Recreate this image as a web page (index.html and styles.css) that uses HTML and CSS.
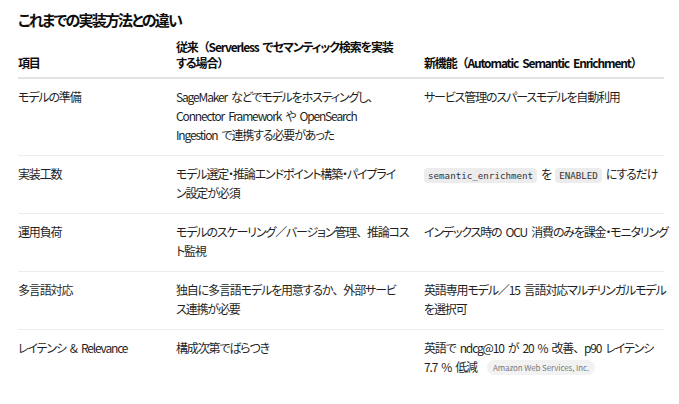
FILE: index.html
```html
<!DOCTYPE html>
<html lang="ja">
<head>
<meta charset="utf-8">
<link rel="stylesheet" href="styles.css">
</head>
<body>
<main class="page">
  <h2 class="title">これまでの実装方法との違い</h2>
  <table class="cmp">
    <colgroup>
      <col class="c1">
      <col class="c2">
      <col class="c3">
    </colgroup>
    <thead>
      <tr>
        <th>項目</th>
        <th>従来<span class="fw">（</span>Serverless でセマンティック検索を実装<br>する場合<span class="fw">）</span></th>
        <th>新機能<span class="fw">（</span>Automatic Semantic Enrichment<span class="fw">）</span></th>
      </tr>
    </thead>
    <tbody>
      <tr>
        <td>モデルの準備</td>
        <td>SageMaker などでモデルをホスティングし<span class="fw">、</span><br>Connector Framework や OpenSearch<br>Ingestion で連携する必要があった</td>
        <td>サービス管理のスパースモデルを自動利用</td>
      </tr>
      <tr>
        <td>実装工数</td>
        <td>モデル選定・推論エンドポイント構築・パイプライ<br>ン設定が必須</td>
        <td><code class="code">semantic_enrichment</code> を <code class="code">ENABLED</code> にするだけ</td>
      </tr>
      <tr>
        <td>運用負荷</td>
        <td>モデルのスケーリング／バージョン管理<span class="fw">、</span>推論コス<br>ト監視</td>
        <td>インデックス時の OCU 消費のみを課金・モニタリング</td>
      </tr>
      <tr>
        <td>多言語対応</td>
        <td>独自に多言語モデルを用意するか<span class="fw">、</span>外部サービ<br>ス連携が必要</td>
        <td>英語専用モデル／15 言語対応マルチリンガルモデル<br>を選択可</td>
      </tr>
      <tr>
        <td>レイテンシ &amp; Relevance</td>
        <td>構成次第でばらつき</td>
        <td>英語で ndcg@10 が 20 % 改善<span class="fw">、</span>p90 レイテンシ<br>7.7 % 低減 <span class="src">Amazon Web Services, Inc.</span></td>
      </tr>
    </tbody>
  </table>
</main>
</body>
</html>
```

FILE: styles.css
```css
html, body {
  margin: 0;
  padding: 0;
  background: #ffffff;
}

body {
  font-family: "Noto Sans CJK JP", "Noto Sans", sans-serif;
  font-feature-settings: "palt";
  color: #1f1f1f;
  font-size: 12px;
}

.page {
  padding: 9px 15px 0 18px;
}

.title {
  margin: 0 0 2px 0;
  font-size: 15px;
  line-height: 22px;
  font-weight: 700;
  letter-spacing: -1.8px;
  color: #0d0d0d;
}

.cmp {
  width: 646px;
  table-layout: fixed;
  border-collapse: collapse;
}

.c1 { width: 158px; }
.c2 { width: 248px; }
.c3 { width: 240px; }

.cmp th,
.cmp td {
  text-align: left;
  white-space: nowrap;
  letter-spacing: -1.15px;
  word-spacing: 2.5px;
}

.fw {
  font-feature-settings: normal;
}

.cmp th {
  vertical-align: bottom;
  font-weight: 700;
  line-height: 16px;
  padding: 6px 8px 6px 0;
  border-bottom: 2px solid #e3e3e3;
  color: #0d0d0d;
}

.cmp td {
  vertical-align: top;
  line-height: 19px;
  padding: 8px 8px 11px 0;
  border-bottom: 1px solid #ececec;
}

.cmp th:last-child,
.cmp td:last-child {
  padding-right: 0;
}

.cmp tbody tr:last-child td {
  border-bottom: none;
}

.code {
  font-family: "DejaVu Sans Mono", monospace;
  font-feature-settings: normal;
  letter-spacing: 0;
  word-spacing: 0;
  font-size: 9.2px;
  background: #ececec;
  color: #333;
  border-radius: 4px;
  padding: 2px 4px;
}

.src {
  display: inline-block;
  margin-left: 6px;
  padding: 0 6px;
  height: 15px;
  line-height: 15px;
  font-size: 8px;
  letter-spacing: -0.1px;
  word-spacing: 0;
  color: #7a7a7a;
  background: #f2f2f2;
  border-radius: 8px;
  vertical-align: 1px;
}
```
